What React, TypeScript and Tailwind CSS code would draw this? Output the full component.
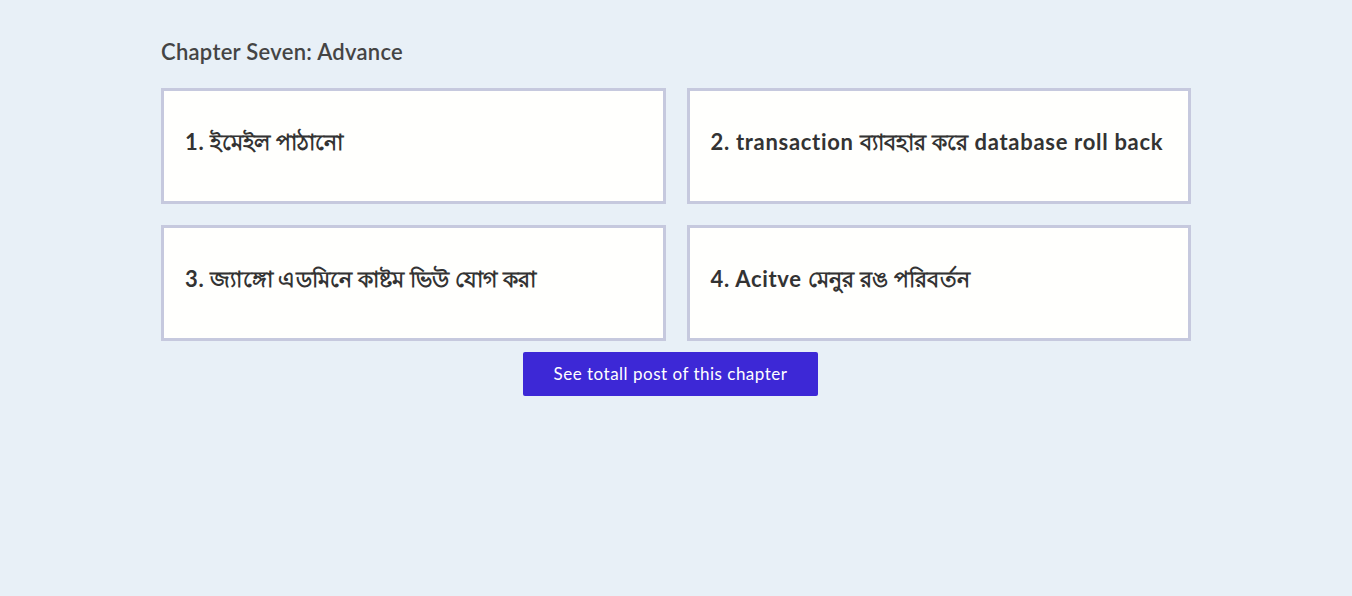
import React from "react";

const items = [
  "1. ইমেইল পাঠানো",
  "2. transaction ব্যাবহার করে database roll back",
  "3. জ্যাঙ্গো এডমিনে কাষ্টম ভিউ যোগ করা",
  "4. Acitve মেনুর রঙ পরিবর্তন",
];

function renderText(t: string) {
  const parts = t.split(/([\u0980-\u09FF]+(?:\s+[\u0980-\u09FF]+)*)/);
  return parts.map((p, i) =>
    /[\u0980-\u09FF]/.test(p) ? (
      <span key={i} className="tracking-[0.2px]">
        {p}
      </span>
    ) : (
      <span key={i} className="tracking-[0.7px]">
        {p}
      </span>
    )
  );
}

export default function App() {
  return (
    <div
      className="min-h-[596px] w-full bg-[#e8f0f7] text-[#333]"
      style={{ fontFamily: '"Lato", "Noto Sans", sans-serif' }}
    >
      <div className="mx-auto w-[1030px] pt-[38px]">
        <h2 className="text-[22px] font-semibold leading-[28px] text-[#444] tracking-[0.28px]">
          Chapter Seven: Advance
        </h2>
        <div className="mt-[22px] grid grid-cols-2 gap-x-[21px] gap-y-[21px]">
          {items.map((t) => (
            <div
              key={t}
              className="flex h-[116px] items-center border-[3px] border-[#c6c9de] bg-[#fffffd] px-[21px] pb-[9px]"
            >
              <span className="text-[22px] font-bold text-[#333] whitespace-nowrap">{renderText(t)}</span>
            </div>
          ))}
        </div>
        <div className="mt-[11px] flex justify-center pr-[11px]">
          <button className="h-[44px] w-[295px] rounded-[2px] bg-[#3d28d6] text-[17px] text-white tracking-[0.5px]">
            See totall post of this chapter
          </button>
        </div>
      </div>
    </div>
  );
}
